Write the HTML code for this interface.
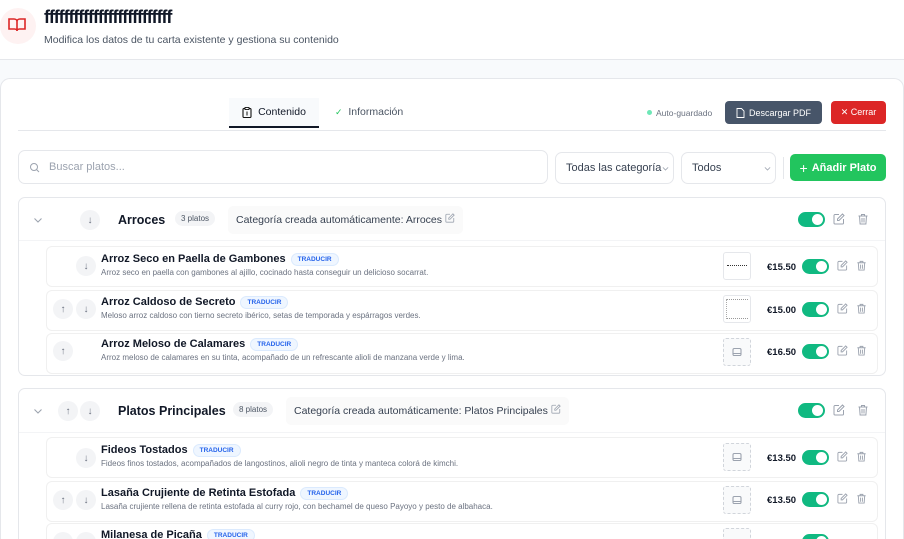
<!DOCTYPE html>
<html><head><meta charset="utf-8"><style>
*{box-sizing:border-box;margin:0;padding:0}
html{width:904px;height:539px;overflow:hidden}
body{width:904px;height:539px;overflow:hidden;font-family:"Liberation Sans",sans-serif;background:#f8fafc;position:relative;color:#111827}
.a{position:absolute}
.hdr{left:0;top:0;width:904px;height:60px;background:#fff;border-bottom:1px solid #e5e7eb}
.card{left:0;top:78px;width:904px;height:461px;background:#fff;border:1px solid #e5e7eb;border-bottom:none;border-radius:10px 10px 0 0}
.btn{border-radius:4px;color:#fff;font-size:9px;display:flex;align-items:center;justify-content:center;gap:4px}
.inp{border:1px solid #e5e7eb;border-radius:7px;background:#fff;font-size:11px;color:#374151;display:flex;align-items:center}
.cat{left:18px;width:868px;border:1px solid #e5e7eb;border-radius:7px;background:#fff}
.circ{width:20px;height:20px;border-radius:50%;background:#f3f4f6;display:flex;align-items:center;justify-content:center;font-size:10px;color:#6b7280}
.tog{width:27px;height:15px;border-radius:8px;background:#10b981}
.tog:after{content:"";position:absolute;right:2px;top:2px;width:11px;height:11px;border-radius:50%;background:#fff}
.item{left:46px;width:832px;height:41px;border:1px solid #f0f0f0;border-radius:6px;background:#fff}
.nm{font-size:11px;font-weight:bold;color:#111827}
.ds{font-size:8px;color:#6b7280}
.tr{display:inline-block;font-size:6.5px;font-weight:bold;color:#2563eb;background:#eff6ff;border:1px solid #dbeafe;border-radius:8px;padding:2px 6px;margin-left:5px;vertical-align:1px}
.img{width:28px;height:28px;border:1px dashed #d1d5db;border-radius:3px;background:#f9fafb}
.pr{font-size:9.5px;font-weight:bold}
</style></head><body>
<svg width="0" height="0" style="position:absolute"><defs>
<symbol id="ed" viewBox="0 0 12 12"><path d="M6 1.5H2a1 1 0 0 0-1 1v7.5a1 1 0 0 0 1 1h7.5a1 1 0 0 0 1-1V6M9.5 1l1.5 1.5L6 7.5H4.5V6z" fill="none" stroke="#9ca3af" stroke-width="1"/></symbol>
<symbol id="tr" viewBox="0 0 12 12"><path d="M1.5 3h9M4.5 3V1.5h3V3M2.5 3l.6 8h5.8l.6-8M5 5v4.5M7 5v4.5" fill="none" stroke="#9ca3af" stroke-width="1"/></symbol>
<symbol id="cv" viewBox="0 0 12 12"><path d="M2.5 4.5 6 8l3.5-3.5" fill="none" stroke="#9ca3af" stroke-width="1.1"/></symbol>
<symbol id="ph" viewBox="0 0 12 12"><rect x="2" y="2.5" width="8" height="7" rx="1.3" fill="none" stroke="#9ca3af" stroke-width="1.1"/><path d="M2 7.5h8" stroke="#9ca3af"/></symbol>
</defs></svg>
<div class="a hdr"></div>
<div class="a" style="left:0;top:8px;width:36px;height:36px;border-radius:50%;background:#fef2f2"></div>
<svg class="a" style="left:8px;top:17px" width="18" height="16" viewBox="0 0 18 16"><path d="M1 2h5c1.5 0 3 1 3 2.5V14c0-1-1-2-2.5-2H1zM17 2h-5c-1.5 0-3 1-3 2.5V14c0-1 1-2 2.5-2H17z" fill="none" stroke="#dc2626" stroke-width="1.6"/></svg>
<div class="a" style="left:44px;top:7px;font-size:18px;font-weight:bold;letter-spacing:-1.1px">ffffffffffffffffffffffffff</div>
<div class="a" style="left:44px;top:34px;font-size:10.5px;color:#4b5563">Modifica los datos de tu carta existente y gestiona su contenido</div>
<div class="a card"></div>
<div class="a" style="left:229px;top:98px;width:90px;height:30px;background:#f8fafc;border-bottom:2px solid #111827;font-size:10.5px;display:flex;align-items:center;justify-content:center;gap:6px"><svg width="10" height="11" viewBox="0 0 10 11"><rect x="1" y="1.5" width="8" height="9" rx="1" fill="none" stroke="#111" stroke-width="1.1"/><rect x="3" y=".5" width="4" height="2" fill="#fff" stroke="#111" stroke-width=".9"/><path d="M5 4.5v4" stroke="#111"/></svg>Contenido</div>
<div class="a" style="left:335px;top:106px;font-size:10.5px;color:#4b5563"><span style="color:#22c55e;font-size:9px">✓</span>&nbsp;&nbsp;Información</div>
<div class="a" style="left:18px;top:130px;width:868px;height:1px;background:#e5e7eb"></div>
<div class="a" style="left:647px;top:110px;width:5px;height:5px;border-radius:50%;background:#6ee7b7"></div>
<div class="a" style="left:656px;top:108px;font-size:8.5px;color:#6b7280">Auto-guardado</div>
<div class="a btn" style="left:725px;top:101px;width:97px;height:23px;background:#475569"><svg width="9" height="10" viewBox="0 0 9 10"><path d="M1 .5h4.5L8 3v6.5H1z" fill="none" stroke="#fff" stroke-width=".9"/></svg> Descargar PDF</div>
<div class="a btn" style="left:831px;top:101px;width:55px;height:23px;background:#dc2626">✕ Cerrar</div>
<div class="a inp" style="left:18px;top:150px;width:530px;height:34px;padding-left:10px;color:#9ca3af"><svg width="11" height="11" viewBox="0 0 11 11" style="margin-right:9px"><circle cx="5" cy="5" r="3.5" fill="none" stroke="#9ca3af" stroke-width="1"/><path d="M7.6 7.6 10 10" stroke="#9ca3af"/></svg>Buscar platos...</div>
<div class="a inp" style="left:555px;top:152px;width:119px;height:32px;padding-left:10px">Todas las categoría<svg width="9" height="9"><use href="#cv"/></svg></div>
<div class="a inp" style="left:681px;top:152px;width:95px;height:32px;padding-left:10px">Todos<svg width="9" height="9" style="margin-left:42px"><use href="#cv"/></svg></div>
<div class="a" style="left:783px;top:157px;width:1px;height:22px;background:#e5e7eb"></div>
<div class="a btn" style="left:790px;top:154px;width:96px;height:27px;background:#22c55e;font-size:11px;font-weight:bold;border-radius:5px"><span style="font-size:14px;font-weight:normal">+</span> Añadir Plato</div>

<!-- cat1 -->
<div class="a cat" style="top:197px;height:179px"></div>
<div class="a" style="left:19px;top:240px;width:866px;height:1px;background:#f3f4f6"></div>
<svg class="a" style="left:32px;top:214px" width="12" height="12"><use href="#cv"/></svg>
<div class="a circ" style="left:80px;top:210px">↓</div>
<div class="a" style="left:118px;top:213px;font-size:12.5px;font-weight:bold">Arroces</div>
<div class="a" style="left:175px;top:211px;font-size:8px;color:#4b5563;background:#f3f4f6;border-radius:9px;padding:3px 6px">3 platos</div>
<div class="a" style="left:228px;top:206px;height:28px;padding:0 8px;background:#fafafa;border-radius:5px;font-size:10.5px;color:#374151;line-height:28px">Categoría creada automáticamente: Arroces <svg width="10" height="10"><use href="#ed"/></svg></div>
<div class="a tog" style="left:798px;top:212px"></div>
<svg class="a" style="left:833px;top:213px" width="12" height="12"><use href="#ed"/></svg>
<svg class="a" style="left:857px;top:213px" width="12" height="12"><use href="#tr"/></svg>

<div class="a item" style="top:246px"></div>
<div class="a circ" style="left:76px;top:256px">↓</div>
<div class="a" style="left:101px;top:253px"><div class="nm">Arroz Seco en Paella de Gambones<span class="tr">TRADUCIR</span></div><div class="ds" style="margin-top:2px">Arroz seco en paella con gambones al ajillo, cocinado hasta conseguir un delicioso socarrat.</div></div>
<div class="a img" style="left:723px;top:252px;border:1px solid #e5e7eb;background:#fff"></div>
<div class="a" style="left:727px;top:265px;width:20px;height:2px;border-top:1px dotted #333"></div>
<div class="a pr" style="left:767px;top:262px">€15.50</div>
<div class="a tog" style="left:802px;top:259px"></div>
<svg class="a" style="left:837px;top:260px" width="11" height="11"><use href="#ed"/></svg><svg class="a" style="left:856px;top:260px" width="11" height="11"><use href="#tr"/></svg>

<div class="a item" style="top:290px"></div>
<div class="a circ" style="left:53px;top:299px">↑</div><div class="a circ" style="left:76px;top:299px">↓</div>
<div class="a" style="left:101px;top:296px"><div class="nm">Arroz Caldoso de Secreto<span class="tr">TRADUCIR</span></div><div class="ds" style="margin-top:2px">Meloso arroz caldoso con tierno secreto ibérico, setas de temporada y espárragos verdes.</div></div>
<div class="a img" style="left:723px;top:295px;border:1px solid #e5e7eb;background:#fff"></div>
<div class="a" style="left:726px;top:299px;width:22px;height:20px;border-top:1px dotted #999;border-bottom:1px dotted #999;border-left:1px dotted #aaa"></div>
<div class="a pr" style="left:767px;top:305px">€15.00</div>
<div class="a tog" style="left:802px;top:302px"></div>
<svg class="a" style="left:837px;top:303px" width="11" height="11"><use href="#ed"/></svg><svg class="a" style="left:856px;top:303px" width="11" height="11"><use href="#tr"/></svg>

<div class="a item" style="top:333px"></div>
<div class="a circ" style="left:53px;top:341px">↑</div>
<div class="a" style="left:101px;top:338px"><div class="nm">Arroz Meloso de Calamares<span class="tr">TRADUCIR</span></div><div class="ds" style="margin-top:2px">Arroz meloso de calamares en su tinta, acompañado de un refrescante alioli de manzana verde y lima.</div></div>
<div class="a img" style="left:723px;top:338px"></div><svg class="a" style="left:731px;top:346px" width="12" height="12"><use href="#ph"/></svg>
<div class="a pr" style="left:767px;top:347px">€16.50</div>
<div class="a tog" style="left:802px;top:344px"></div>
<svg class="a" style="left:837px;top:345px" width="11" height="11"><use href="#ed"/></svg><svg class="a" style="left:856px;top:345px" width="11" height="11"><use href="#tr"/></svg>

<!-- cat2 -->
<div class="a cat" style="top:388px;height:170px"></div>
<div class="a" style="left:19px;top:432px;width:866px;height:1px;background:#f3f4f6"></div>
<svg class="a" style="left:32px;top:405px" width="12" height="12"><use href="#cv"/></svg>
<div class="a circ" style="left:58px;top:401px">↑</div><div class="a circ" style="left:80px;top:401px">↓</div>
<div class="a" style="left:118px;top:404px;font-size:12.5px;font-weight:bold">Platos Principales</div>
<div class="a" style="left:233px;top:402px;font-size:8px;color:#4b5563;background:#f3f4f6;border-radius:9px;padding:3px 6px">8 platos</div>
<div class="a" style="left:286px;top:397px;height:28px;padding:0 8px;background:#fafafa;border-radius:5px;font-size:10.5px;color:#374151;line-height:28px">Categoría creada automáticamente: Platos Principales <svg width="10" height="10"><use href="#ed"/></svg></div>
<div class="a tog" style="left:798px;top:403px"></div>
<svg class="a" style="left:833px;top:404px" width="12" height="12"><use href="#ed"/></svg><svg class="a" style="left:857px;top:404px" width="12" height="12"><use href="#tr"/></svg>

<div class="a item" style="top:437px"></div>
<div class="a circ" style="left:76px;top:448px">↓</div>
<div class="a" style="left:101px;top:444px"><div class="nm">Fideos Tostados<span class="tr">TRADUCIR</span></div><div class="ds" style="margin-top:2px">Fideos finos tostados, acompañados de langostinos, alioli negro de tinta y manteca colorá de kimchi.</div></div>
<div class="a img" style="left:723px;top:443px"></div><svg class="a" style="left:731px;top:451px" width="12" height="12"><use href="#ph"/></svg>
<div class="a pr" style="left:767px;top:453px">€13.50</div>
<div class="a tog" style="left:802px;top:450px"></div>
<svg class="a" style="left:837px;top:451px" width="11" height="11"><use href="#ed"/></svg><svg class="a" style="left:856px;top:451px" width="11" height="11"><use href="#tr"/></svg>

<div class="a item" style="top:481px"></div>
<div class="a circ" style="left:53px;top:490px">↑</div><div class="a circ" style="left:76px;top:490px">↓</div>
<div class="a" style="left:101px;top:487px"><div class="nm">Lasaña Crujiente de Retinta Estofada<span class="tr">TRADUCIR</span></div><div class="ds" style="margin-top:2px">Lasaña crujiente rellena de retinta estofada al curry rojo, con bechamel de queso Payoyo y pesto de albahaca.</div></div>
<div class="a img" style="left:723px;top:486px"></div><svg class="a" style="left:731px;top:494px" width="12" height="12"><use href="#ph"/></svg>
<div class="a pr" style="left:767px;top:495px">€13.50</div>
<div class="a tog" style="left:802px;top:492px"></div>
<svg class="a" style="left:837px;top:493px" width="11" height="11"><use href="#ed"/></svg><svg class="a" style="left:856px;top:493px" width="11" height="11"><use href="#tr"/></svg>

<div class="a item" style="top:523px"></div>
<div class="a circ" style="left:53px;top:532px">↑</div><div class="a circ" style="left:76px;top:532px">↓</div>
<div class="a" style="left:101px;top:529px"><div class="nm">Milanesa de Picaña<span class="tr">TRADUCIR</span></div></div>
<div class="a img" style="left:723px;top:528px"></div>
<div class="a tog" style="left:802px;top:534px"></div>
</body></html>
